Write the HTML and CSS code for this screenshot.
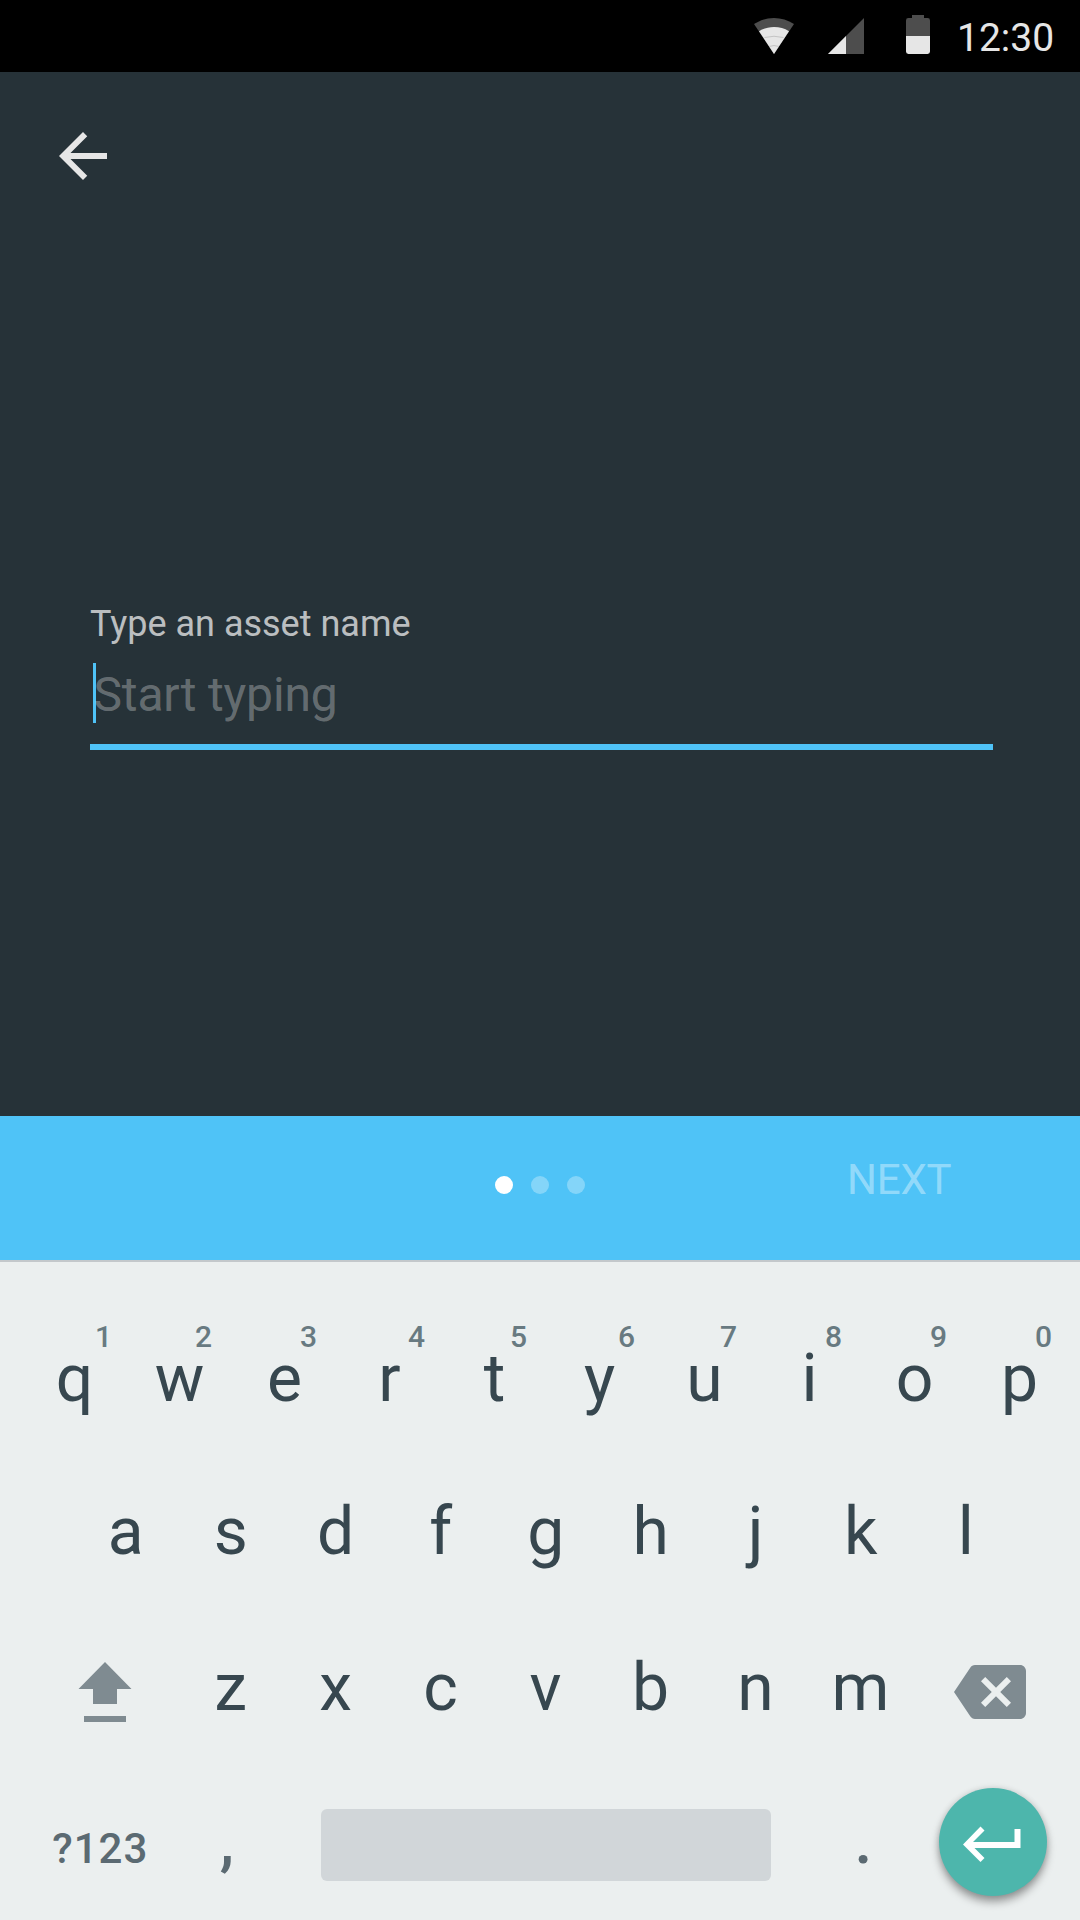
FILE: index.html
```html
<!DOCTYPE html>
<html lang="en">
<head>
<meta charset="utf-8">
<title>New asset</title>
<link rel="stylesheet" href="styles.css">
</head>
<body>
<div class="screen">
  <header class="status">
    <svg class="status-wifi" width="40" height="36" viewBox="0 0 40 36"><path class="dim" d="M20 36L0 6C6 2 13 0 20 0s14 2 20 6z"/><path class="lit" d="M20 36L5 13.2C9.500 10.400 14.500 9 20 9s10.500 1.400 15 4.200z"/><path class="arc" d="M10.500 19.500Q20 17 29.500 19.500M15 28.500Q20 26.500 25 28.500"/></svg>
    <svg class="status-signal" width="36" height="36" viewBox="0 0 36 36"><path class="dim" d="M36 0v36H0z"/><path class="lit" d="M18 18v18H0z"/></svg>
    <svg class="status-battery" width="24" height="39" viewBox="0 0 24 39"><path class="dim" d="M6 0h12v3h3.600A2.400 2.400 0 0 1 24 5.400V21H0V5.400A2.400 2.400 0 0 1 2.400 3H6z"/><path class="lit" d="M0 21h24v15.600a2.400 2.400 0 0 1-2.400 2.400H2.400A2.400 2.400 0 0 1 0 36.600z"/></svg>
    <time class="clock">12:30</time>
  </header>
  <main class="content">
    <svg class="back" viewBox="0 0 24 24"><path d="M20 11H7.830l5.590-5.590L12 4l-8 8 8 8 1.410-1.410L7.830 13H20z"/></svg>
    <div class="field">
      <div class="label">Type an asset name</div>
      <div class="input"><span class="caret"></span><span class="placeholder">Start typing</span></div>
    </div>
  </main>
  <nav class="stepper">
    <div></div>
    <div class="dots"><i class="dot on"></i><i class="dot"></i><i class="dot"></i></div>
    <div class="next">NEXT</div>
  </nav>
  <section class="keyboard">
    <div class="row top">
      <span class="key">q<sup class="alt one">1</sup></span><span class="key">w<sup class="alt">2</sup></span><span class="key">e<sup class="alt">3</sup></span><span class="key">r<sup class="alt wide">4</sup></span><span class="key">t<sup class="alt">5</sup></span><span class="key">y<sup class="alt wide">6</sup></span><span class="key">u<sup class="alt">7</sup></span><span class="key">i<sup class="alt">8</sup></span><span class="key">o<sup class="alt">9</sup></span><span class="key">p<sup class="alt">0</sup></span>
    </div>
    <div class="row home">
      <span class="key">a</span><span class="key">s</span><span class="key">d</span><span class="key">f</span><span class="key">g</span><span class="key">h</span><span class="key">j</span><span class="key">k</span><span class="key">l</span>
    </div>
    <div class="row lower">
      <span class="key shift"><svg width="54" height="60" viewBox="0 0 54 60"><path d="M27 0l26.500 27H39v15H15V27H.5zM6 54h42v6H6z"/></svg></span><span class="key">z</span><span class="key">x</span><span class="key">c</span><span class="key">v</span><span class="key">b</span><span class="key">n</span><span class="key">m</span><span class="key delete"><svg width="72" height="72" viewBox="0 0 24 24"><path d="M22 3H7c-.69 0-1.230.35-1.590.88L0 12l5.410 8.110c.36.53.9.89 1.590.89h15c1.100 0 2-.9 2-2V5c0-1.100-.9-2-2-2zm-3 12.590L17.590 17 14 13.410 10.410 17 9 15.590 12.590 12 9 8.410 10.410 7 14 10.590 17.590 7 19 8.410 15.410 12z"/></svg></span>
    </div>
    <div class="row bottom">
      <span class="symbols">?123</span><span class="comma">,</span><span class="space"></span><span class="period">.</span>
      <span class="enter"><svg width="58" height="36" viewBox="0 0 58 36"><path d="M51.500 3h6v19h-46l10 10-4 4L0 18.500 17.500.5l4 4-11.500 11.500h41.500z"/></svg></span>
    </div>
  </section>
</div>
</body>
</html>
```
FILE: styles.css
```css
* { box-sizing: border-box; }
body { margin: 0; font-family: Roboto, sans-serif; }
svg { display: block; flex: none; }
.screen { width: 1080px; height: 1920px; display: flex; flex-direction: column; overflow: hidden; background: #263238; }

.status { height: 72px; display: flex; align-items: flex-start; background: #000; color: #e6e6e6; }
.status-wifi { margin: 18px 0 0 754px; }
.status-signal { margin: 18px 0 0 34px; }
.status-battery { margin: 15px 0 0 42px; }
.dim { fill: #4d4d4d; }
.lit { fill: #e6e6e6; }
.arc { fill: none; stroke: #c4c4c4; stroke-width: 1; }
.clock { margin-left: 27px; font-size: 39px; line-height: 76px; }

.content { height: 1044px; padding: 48px 87px 0 47px; }
.back { width: 72px; height: 72px; fill: #e6e6e6; }
.field { margin: 410px 0 0 43px; border-bottom: 6px solid #4fc3f7; height: 148px; }
.label { font-size: 36px; line-height: 44px; color: rgba(255,255,255,.7); }
.input { display: flex; margin-top: 17px; padding-left: 3px; }
.caret { width: 3px; height: 60px; background: #4fc3f7; }
.placeholder { margin-left: -2.500px; font-size: 48px; line-height: 63px; letter-spacing: -.15px; color: rgba(255,255,255,.3); }

.stepper { height: 144px; display: grid; grid-template-columns: 1fr 90px 1fr; background: #4fc3f7; }
.dots { display: flex; gap: 18px; padding-top: 60px; }
.dot { width: 18px; height: 18px; border-radius: 50%; background: rgba(255,255,255,.3); }
.dot.on { background: #fff; }
.next { padding: 38px 0 0 262px; font-size: 42px; line-height: 51px; letter-spacing: -.2px; color: rgba(255,255,255,.4); }

.keyboard { height: 660px; padding-top: 42px; background: #ebefef; box-shadow: inset 0 2px #c3c8cb; color: #37474f; }
.row { display: flex; height: 153px; }
.key { position: relative; width: 105px; flex: none; display: flex; align-items: center; justify-content: center; font-size: 66px; line-height: 77px; }
.alt { position: absolute; left: 50%; top: 17px; width: 48px; font-size: 30px; line-height: 36px; font-weight: 500; text-align: center; color: #687a81; }
.alt.wide { width: 54px; }
.alt.one { width: 58px; }
.top { padding-left: 22px; }
.home { padding-left: 73.200px; }
.lower { height: 156px; padding-top: 3px; }
.shift { width: 178px; padding: 9px 0 0 78px; justify-content: flex-start; }
.shift svg, .delete svg { fill: #7f8b91; }
.delete { width: 167px; padding: 9px 0 0 41px; justify-content: flex-start; }
.bottom { height: 156px; align-items: flex-start; font-weight: 500; color: #5b6a72; }
.symbols { width: 217px; padding: 59px 0 0 52.300px; font-size: 42px; line-height: 51px; letter-spacing: 1px; }
.comma { width: 104px; padding: 43px 0 0 2.700px; font-size: 64px; line-height: 70px; }
.space { width: 450px; height: 72px; margin-top: 45px; border-radius: 6px; background: #d1d6d9; }
.period { width: 168px; padding: 43px 0 0 83.500px; font-size: 64px; line-height: 70px; }
.enter { width: 108px; height: 108px; margin-top: 24px; padding: 38px 0 0 24px; border-radius: 50%; background: #4db6ac; box-shadow: 0 6px 9px rgba(0,0,0,.35), 0 0 6px rgba(0,0,0,.12); fill: #fff; }
```
